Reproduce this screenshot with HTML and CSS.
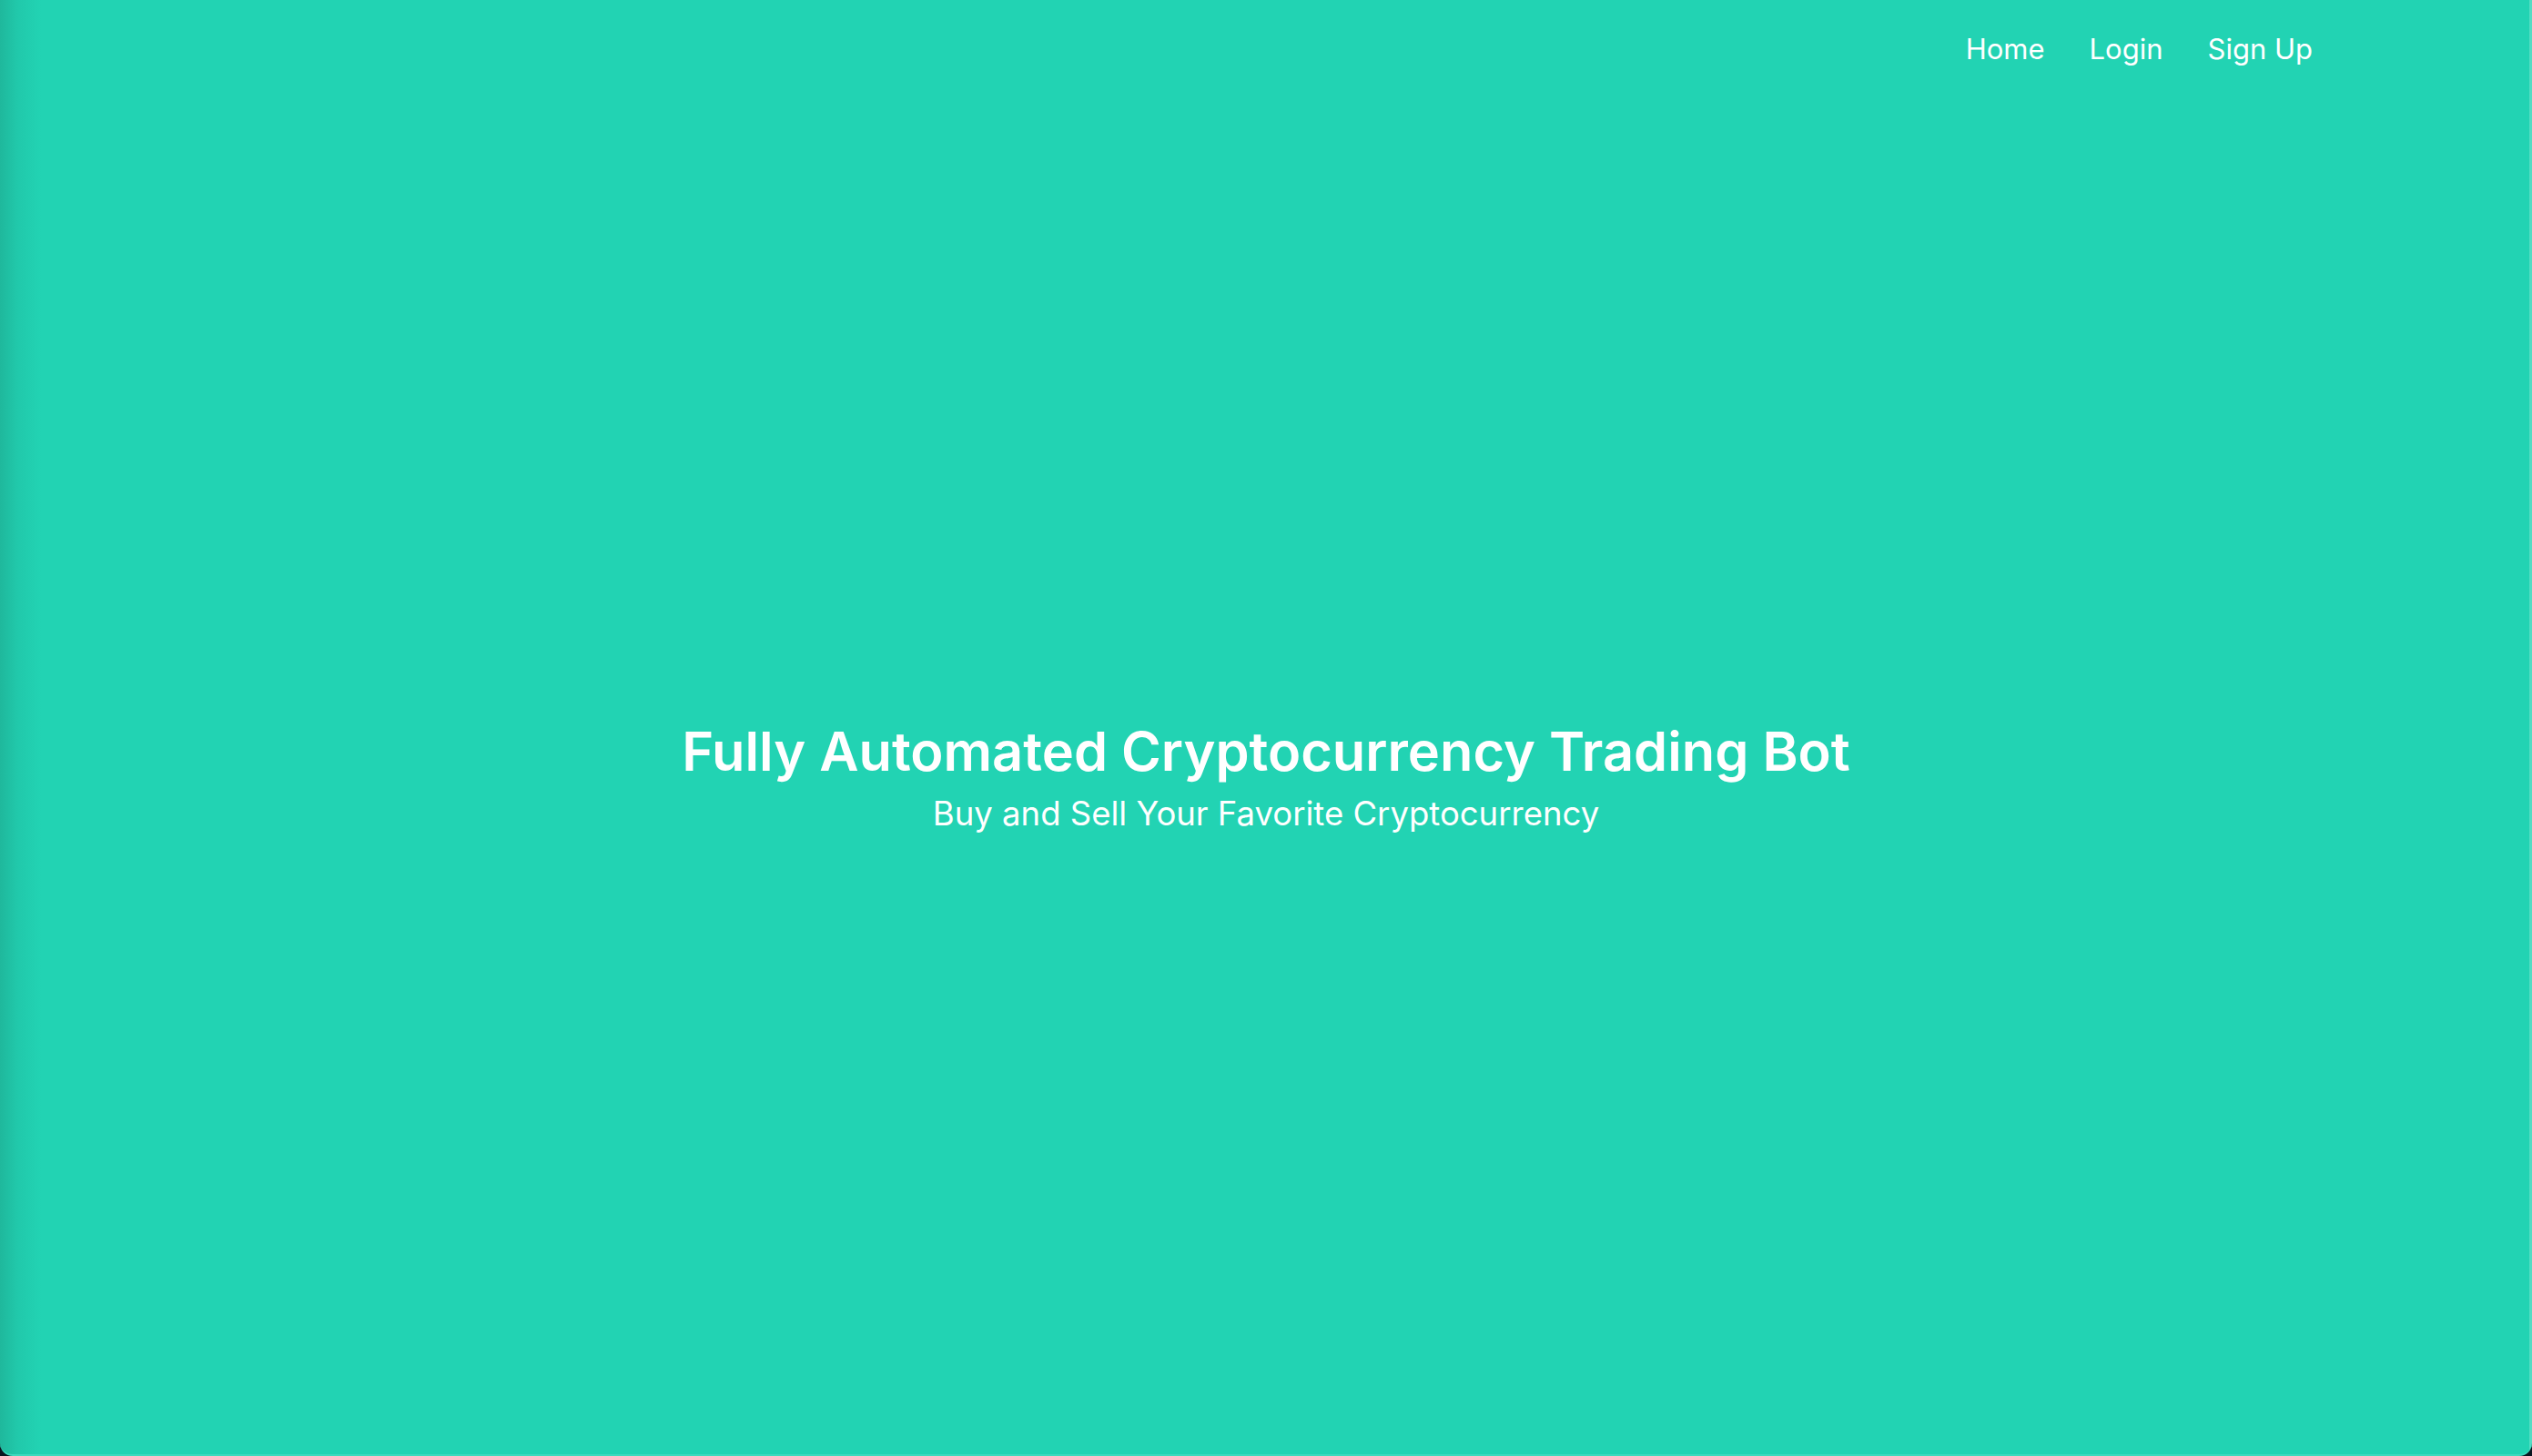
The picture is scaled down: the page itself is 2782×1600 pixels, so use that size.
FILE: index.html
```html
<!DOCTYPE html>
<html lang="en">
<head>
<meta charset="utf-8">
<title>Crypto Trading Bot</title>
<link rel="stylesheet" href="styles.css">
</head>
<body>
<div class="screen">
  <header class="nav">
    <a class="nav-link" href="#">Home</a>
    <a class="nav-link" href="#">Login</a>
    <a class="nav-link" href="#">Sign Up</a>
  </header>
  <main class="hero">
    <h1 class="hero-title">Fully Automated Cryptocurrency Trading Bot</h1>
    <p class="hero-sub">Buy and Sell Your Favorite Cryptocurrency</p>
  </main>
</div>
</body>
</html>
```
FILE: styles.css
```css
html, body {
  margin: 0;
  padding: 0;
  background: #0a1620;
  height: 1600px;
  overflow: hidden;
}
.screen {
  height: 1600px;
  box-sizing: border-box;
  background: linear-gradient(90deg, #1fb89c 0px, #21c9ab 20px, #22d3b3 45px, #22d3b3 calc(100% - 3px), #52dcc3 calc(100% - 3px));
  border-radius: 0 0 14px 14px;
  display: flex;
  flex-direction: column;
  font-family: Inter, "Noto Sans", sans-serif;
  color: #ffffff;
  border-bottom: 2px solid #3ddabd;
}
.nav {
  display: flex;
  justify-content: flex-end;
  gap: 49px;
  padding: 32px 241px 0 0;
}
.nav-link {
  color: #ffffff;
  text-decoration: none;
  font-size: 31px;
  line-height: 44px;
}
.hero {
  flex: 1;
  display: flex;
  flex-direction: column;
  align-items: center;
  justify-content: center;
  padding-top: 33px;
}
.hero-title {
  margin: 0 0 9px;
  font-size: 59.5px;
  font-weight: 600;
  line-height: 72px;
}
.hero-sub {
  margin: 0;
  font-size: 36.5px;
  line-height: 48px;
}
```
